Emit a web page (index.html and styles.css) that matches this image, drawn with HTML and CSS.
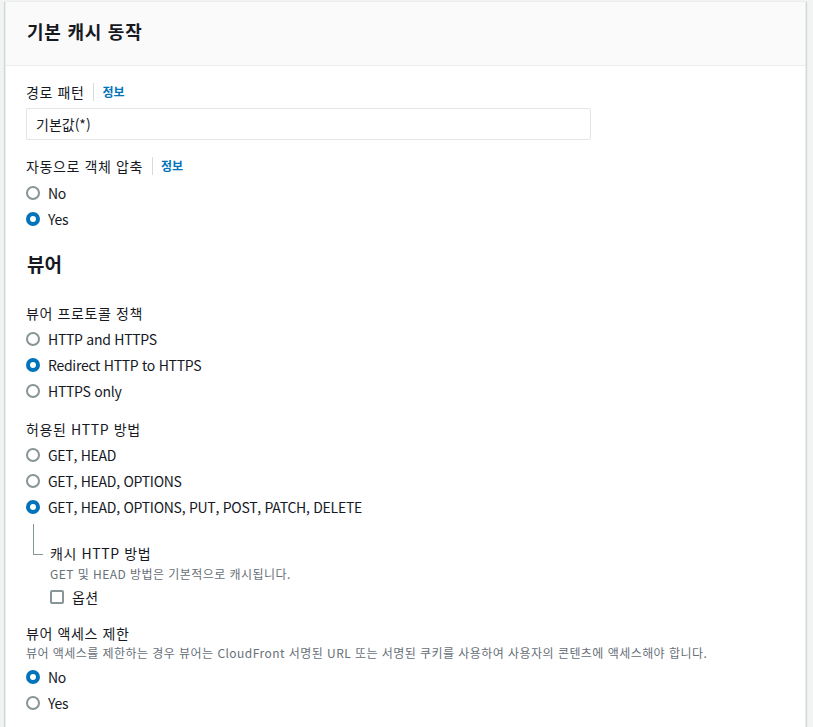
FILE: index.html
```html
<!DOCTYPE html>
<html lang="ko">
<head>
<meta charset="utf-8">
<link rel="stylesheet" href="styles.css">
</head>
<body>
<div class="card">
  <div class="card-header"><h2 class="title">기본 캐시 동작</h2></div>
  <div class="card-body">
    <div class="label">경로 패턴<span class="info">정보</span></div>
    <div class="input">기본값(*)</div>

    <div class="label mt15">자동으로 객체 압축<span class="info">정보</span></div>
    <div class="group">
      <div class="row"><span class="radio"></span>No</div>
      <div class="row"><span class="radio on"></span>Yes</div>
    </div>

    <h3 class="section">뷰어</h3>

    <div class="label">뷰어 프로토콜 정책</div>
    <div class="group g2">
      <div class="row"><span class="radio"></span>HTTP and HTTPS</div>
      <div class="row"><span class="radio on"></span>Redirect HTTP to HTTPS</div>
      <div class="row"><span class="radio"></span>HTTPS only</div>
    </div>

    <div class="label mt14">허용된 HTTP 방법</div>
    <div class="group g2">
      <div class="row"><span class="radio"></span>GET, HEAD</div>
      <div class="row"><span class="radio"></span>GET, HEAD, OPTIONS</div>
      <div class="row"><span class="radio on"></span>GET, HEAD, OPTIONS, PUT, POST, PATCH, DELETE</div>
    </div>

    <div class="sub">
      <div class="connector"></div>
      <div class="sub-content">
        <div class="label">캐시 HTTP 방법</div>
        <div class="desc">GET 및 HEAD 방법은 기본적으로 캐시됩니다.</div>
        <div class="row check-row"><span class="checkbox"></span>옵션</div>
      </div>
    </div>

    <div class="label mt14">뷰어 액세스 제한</div>
    <div class="desc tight">뷰어 액세스를 제한하는 경우 뷰어는 CloudFront 서명된 URL 또는 서명된 쿠키를 사용하여 사용자의 콘텐츠에 액세스해야 합니다.</div>
    <div class="group g3">
      <div class="row"><span class="radio on"></span>No</div>
      <div class="row"><span class="radio"></span>Yes</div>
    </div>
  </div>
</div>
</body>
</html>
```

FILE: styles.css
```css
html, body {
  margin: 0;
  padding: 0;
  background: #f2f3f3;
}
body {
  font-family: "Noto Sans CJK KR", "Noto Sans", sans-serif;
  font-size: 14px;
  color: #16191f;
  padding: 1px 0 0 5px;
}
.card {
  width: 799px;
  background: #fff;
  border: 1px solid #eaeded;
  box-shadow: 0 1px 1px 0 rgba(0,28,36,.2), 1px 1px 1px 0 rgba(0,28,36,.1), -1px 1px 1px 0 rgba(0,28,36,.1);
  min-height: 760px;
}
.card-header {
  background: #fafafa;
  border-bottom: 1px solid #eaeded;
  padding: 18px 20px 0 21px;
  height: 45px;
}
.title {
  margin: 0;
  font-size: 18px;
  line-height: 22px;
  font-weight: 700;
  letter-spacing: 0.75px;
}
.card-body {
  padding: 15px 20px 0 20px;
}
.label {
  display: flex;
  align-items: center;
  line-height: 22px;
  height: 22px;
  letter-spacing: 0.6px;
}
.info {
  color: #0073bb;
  font-size: 12px;
  font-weight: 700;
  border-left: 1px solid #d5dbdb;
  margin-left: 9px;
  padding-left: 8px;
  line-height: 18px;
  letter-spacing: 0;
}
.mt15 { margin-top: 15px; }
.mt14 { margin-top: 14px; }
.input {
  margin-top: 5px;
  width: 545px;
  height: 30px;
  border: 1px solid #e3e6e6;
  border-radius: 2px;
  padding: 0 9px;
  line-height: 30px;
}
.group { margin-top: 3px; }
.g2 { margin-top: 2px; }
.g3 { margin-top: 3px; }
.row {
  display: flex;
  align-items: center;
  height: 26px;
  line-height: 22px;
  letter-spacing: -0.28px;
}
.radio {
  width: 14px;
  height: 14px;
  box-sizing: border-box;
  border: 2px solid #879596;
  border-radius: 50%;
  margin-right: 8px;
  flex: none;
}
.radio.on {
  border: 4px solid #0073bb;
}
.section {
  margin: 18px 0 0 1px;
  font-size: 19px;
  line-height: 28px;
  font-weight: 700;
}
.section + .label { margin-top: 24px; }
.sub {
  display: flex;
  align-items: flex-start;
}
.connector {
  margin: 4px 0 0 7px;
  width: 9px;
  height: 30px;
  border-left: 1px solid #879596;
  border-bottom: 1px solid #879596;
  flex: none;
}
.sub-content {
  margin-left: 7px;
  padding-top: 22px;
}
.desc {
  font-size: 12px;
  line-height: 16px;
  color: #687078;
  margin-top: 2px;
  letter-spacing: 0.45px;
}
.desc.tight { margin-top: 1px; }
.check-row {
  height: 22px;
  margin-top: 4px;
  letter-spacing: 0.3px;
}
.checkbox {
  width: 14px;
  height: 14px;
  box-sizing: border-box;
  border: 2px solid #879596;
  border-radius: 2px;
  margin-right: 8px;
}
```
